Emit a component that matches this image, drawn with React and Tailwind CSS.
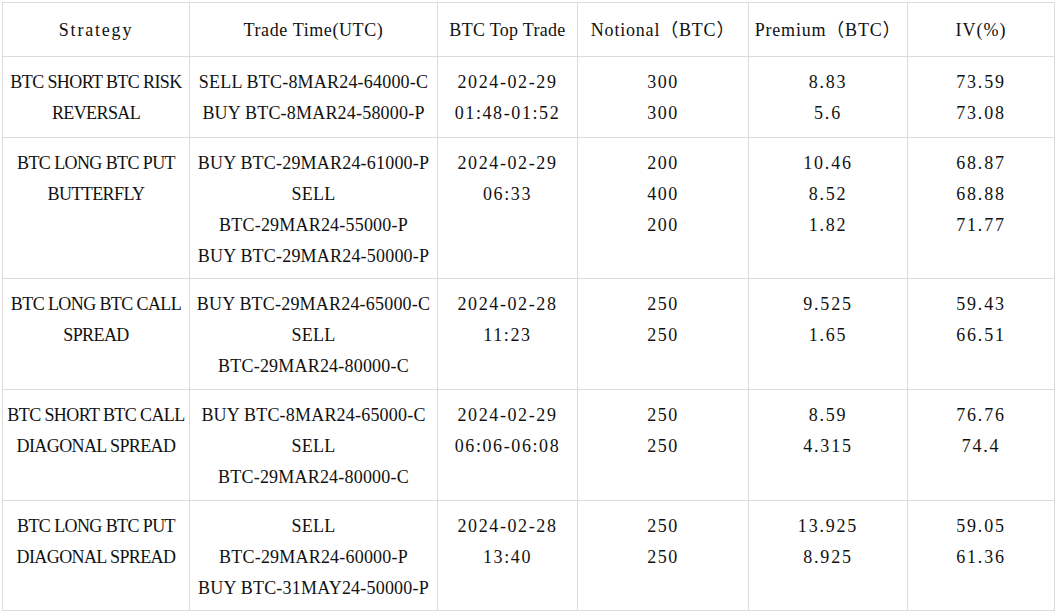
import React from "react";

const rows = [
  {
    h: "h-[81px]",
    s: ["BTC SHORT BTC RISK", "REVERSAL"],
    t: ["SELL BTC-8MAR24-64000-C", "BUY BTC-8MAR24-58000-P"],
    d: ["2024-02-29", "01:48-01:52"],
    n: ["300", "300"],
    p: ["8.83", "5.6"],
    v: ["73.59", "73.08"],
  },
  {
    h: "h-[141px]",
    s: ["BTC LONG BTC PUT", "BUTTERFLY"],
    t: ["BUY BTC-29MAR24-61000-P", "SELL", "BTC-29MAR24-55000-P", "BUY BTC-29MAR24-50000-P"],
    d: ["2024-02-29", "06:33"],
    n: ["200", "400", "200"],
    p: ["10.46", "8.52", "1.82"],
    v: ["68.87", "68.88", "71.77"],
  },
  {
    h: "h-[111px]",
    s: ["BTC LONG BTC CALL", "SPREAD"],
    t: ["BUY BTC-29MAR24-65000-C", "SELL", "BTC-29MAR24-80000-C"],
    d: ["2024-02-28", "11:23"],
    n: ["250", "250"],
    p: ["9.525", "1.65"],
    v: ["59.43", "66.51"],
  },
  {
    h: "h-[111px]",
    s: ["BTC SHORT BTC CALL", "DIAGONAL SPREAD"],
    t: ["BUY BTC-8MAR24-65000-C", "SELL", "BTC-29MAR24-80000-C"],
    d: ["2024-02-29", "06:06-06:08"],
    n: ["250", "250"],
    p: ["8.59", "4.315"],
    v: ["76.76", "74.4"],
  },
  {
    h: "h-[110px]",
    s: ["BTC LONG BTC PUT", "DIAGONAL SPREAD"],
    t: ["SELL", "BTC-29MAR24-60000-P", "BUY BTC-31MAY24-50000-P"],
    d: ["2024-02-28", "13:40"],
    n: ["250", "250"],
    p: ["13.925", "8.925"],
    v: ["59.05", "61.36"],
  },
];

const headers = [
  { t: "Strategy", c: "tracking-[1.8px]" },
  { t: "Trade Time(UTC)", c: "tracking-[0.6px]" },
  { t: "BTC Top Trade", c: "tracking-[0.3px]" },
  { t: "Notional（BTC）", c: "tracking-[0.8px]" },
  { t: "Premium（BTC）", c: "tracking-[0.8px]" },
  { t: "IV(%)", c: "tracking-[1px]" },
];

function Cell({ lines, h, c }) {
  return (
    <div className={`${h} border-r border-b border-[#dcdcdc] pt-[10px] flex flex-col items-center`}>
      {lines.map((l, i) => (
        <div key={i} className={`whitespace-nowrap leading-[31px] ${c}`}>
          {l}
        </div>
      ))}
    </div>
  );
}

export default function App() {
  return (
    <div className="w-[1057px] h-[612px] bg-white p-[2px]">
      <div
        className="grid grid-cols-[187px_248px_140px_171px_159px_147px] border-l border-t border-[#dcdcdc] text-[18px] text-[#111111]"
        style={{ fontFamily: '"Liberation Serif", "Noto Sans CJK SC", serif' }}
      >
        {headers.map((h, i) => (
          <div
            key={i}
            className={`h-[54px] border-r border-b border-[#dcdcdc] pt-[2px] flex items-center justify-center whitespace-nowrap ${h.c}`}
          >
            {h.t}
          </div>
        ))}
        {rows.map((r, i) => (
          <React.Fragment key={i}>
            <Cell lines={r.s} h={r.h} c="tracking-[-0.6px]" />
            <Cell lines={r.t} h={r.h} c="tracking-[0.2px]" />
            <Cell lines={r.d} h={r.h} c="tracking-[1.6px]" />
            <Cell lines={r.n} h={r.h} c="tracking-[1.5px]" />
            <Cell lines={r.p} h={r.h} c="tracking-[1.8px]" />
            <Cell lines={r.v} h={r.h} c="tracking-[1.8px]" />
          </React.Fragment>
        ))}
      </div>
    </div>
  );
}
